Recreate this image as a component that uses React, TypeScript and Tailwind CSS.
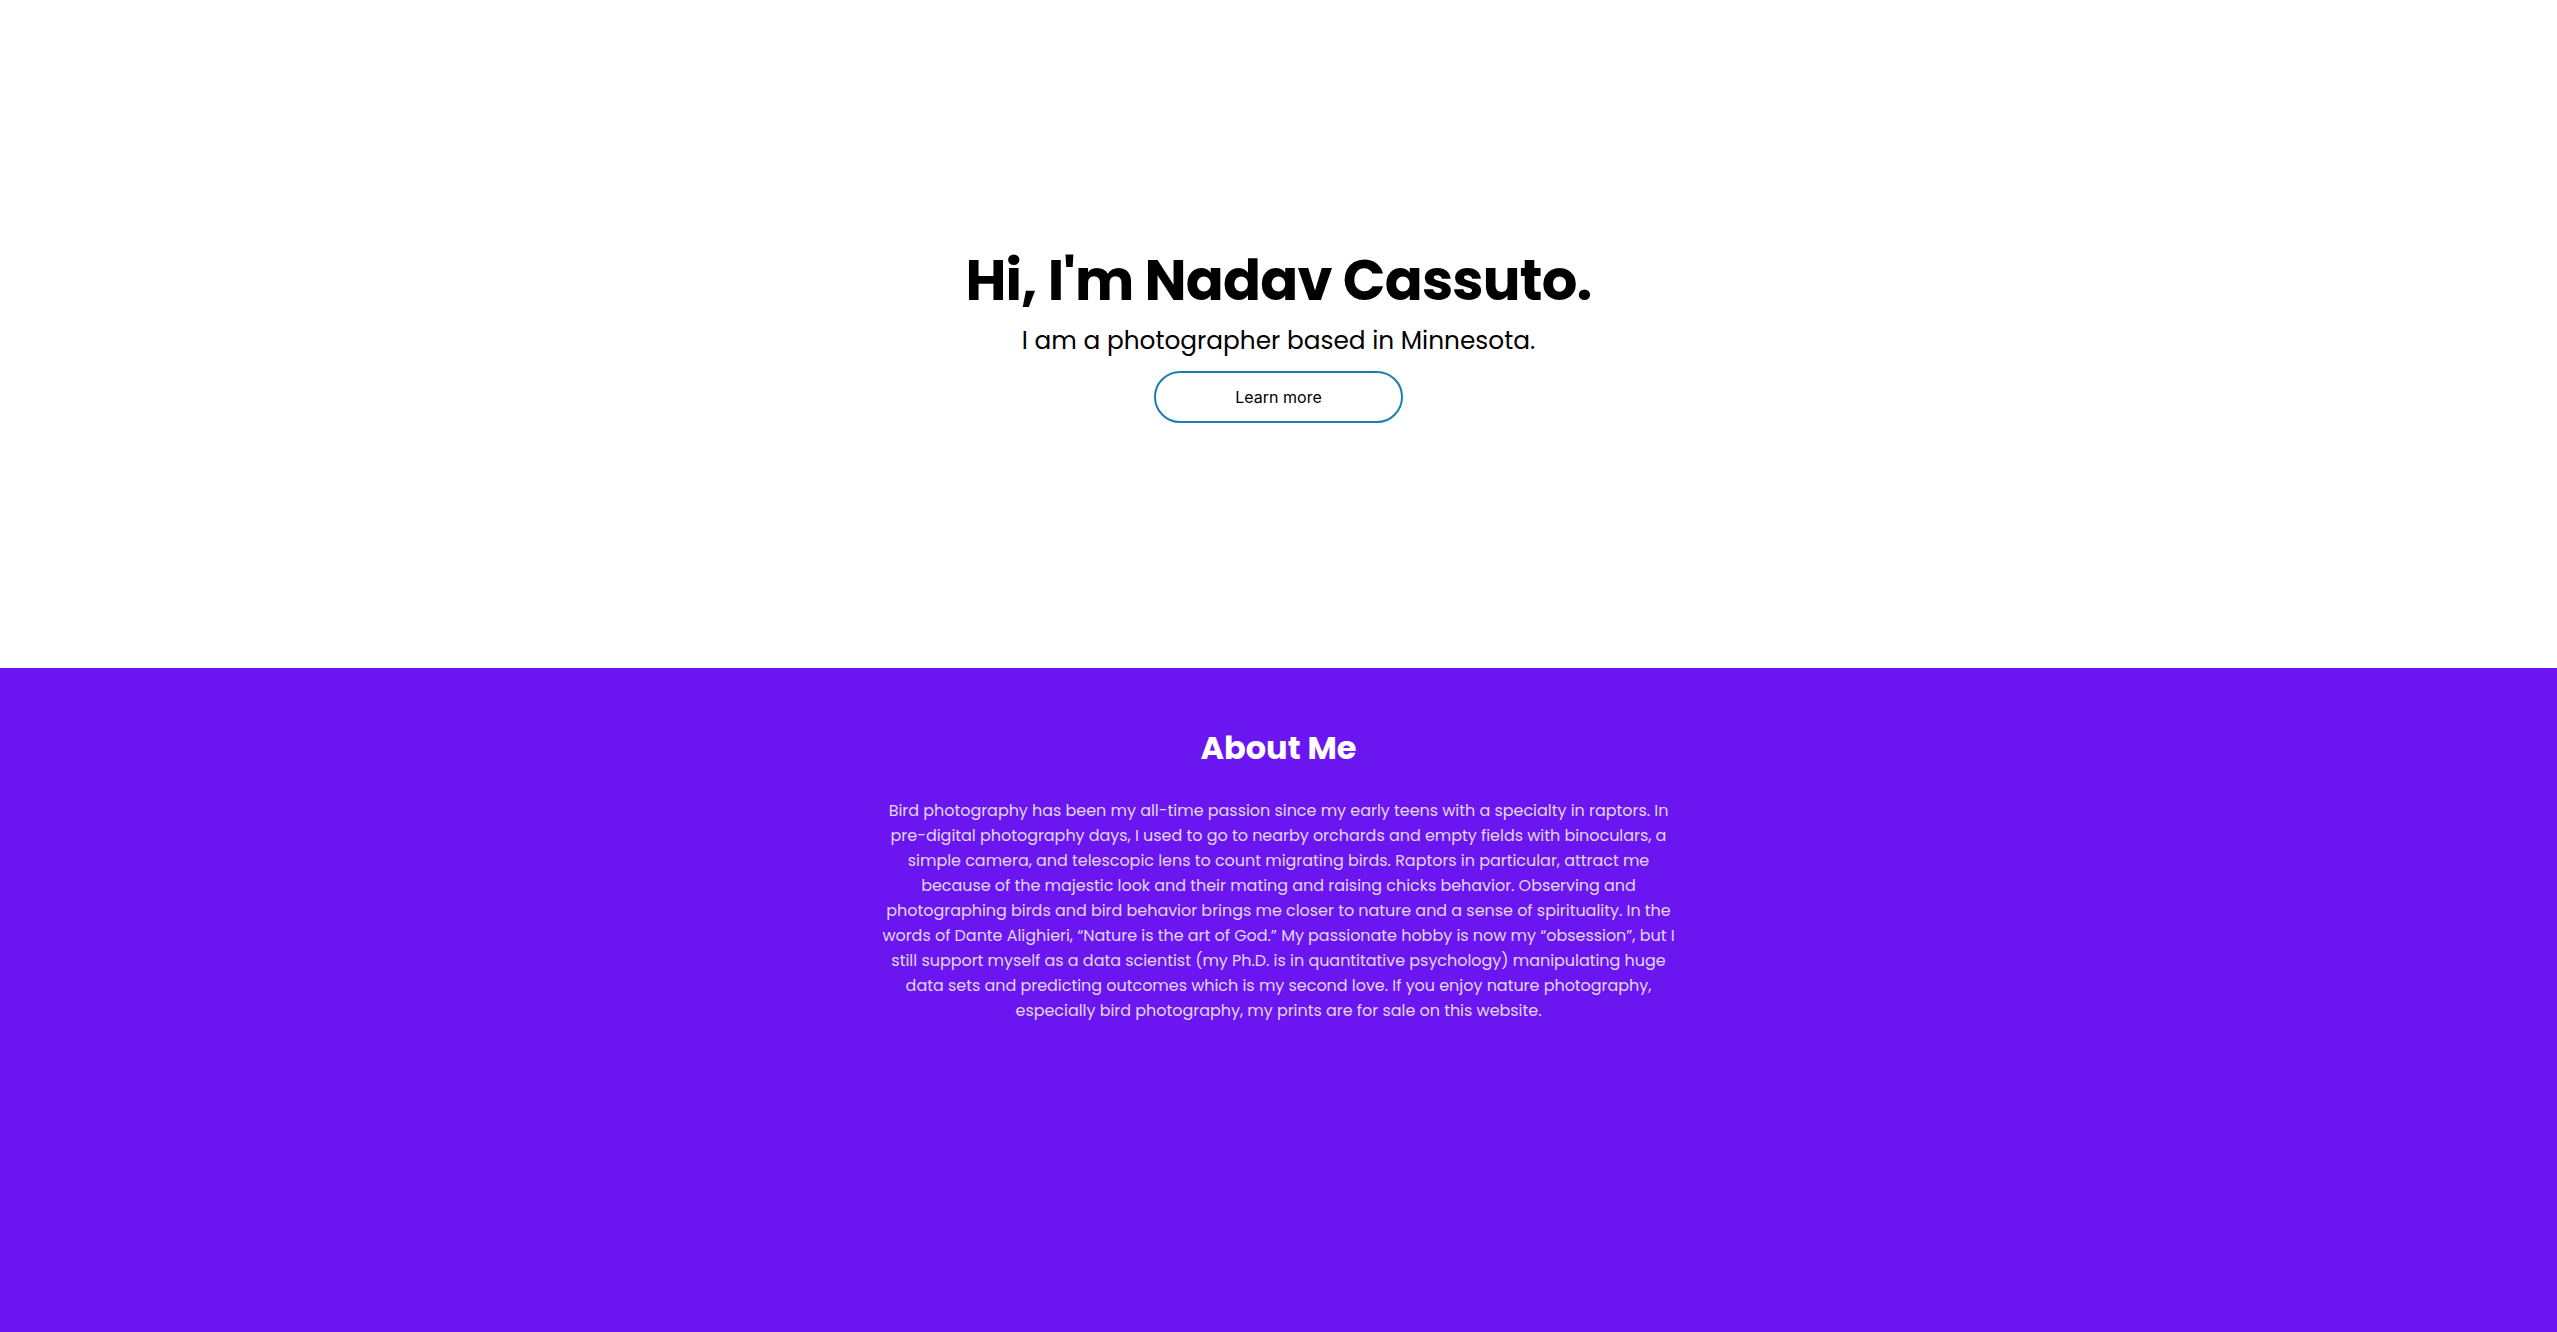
const aboutLines = [
  'Bird photography has been my all-time passion since my early teens with a specialty in raptors. In',
  'pre-digital photography days, I used to go to nearby orchards and empty fields with binoculars, a',
  'simple camera, and telescopic lens to count migrating birds. Raptors in particular, attract me',
  'because of the majestic look and their mating and raising chicks behavior. Observing and',
  'photographing birds and bird behavior brings me closer to nature and a sense of spirituality. In the',
  'words of Dante Alighieri, \u201cNature is the art of God.\u201d My passionate hobby is now my \u201cobsession\u201d, but I',
  'still support myself as a data scientist (my Ph.D. is in quantitative psychology) manipulating huge',
  'data sets and predicting outcomes which is my second love. If you enjoy nature photography,',
  'especially bird photography, my prints are for sale on this website.',
];

export default function App() {
  return (
    <div className="min-h-screen bg-white font-['Poppins','Inter',sans-serif]">
      {/* Hero */}
      <section className="flex h-[668px] flex-col items-center justify-center text-center">
        <h1 className="mt-[2px] text-[56px] font-bold leading-[1.2] tracking-[-0.8px] text-black">Hi, I'm Nadav Cassuto.</h1>
        <p className="mt-[8px] text-[24.8px] leading-[1.5] text-black">I am a photographer based in Minnesota.</p>
        <button className="mt-3 h-[52px] w-[249px] rounded-full border-2 border-[#1a7fb0] bg-white font-['Inter',sans-serif] text-[16px] text-black">
          Learn more
        </button>
      </section>

      {/* About */}
      <section className="flex h-[664px] flex-col items-center bg-[#6b16f1] pt-14 text-center">
        <h2 className="text-[32px] font-bold leading-[1.5] text-white">About Me</h2>
        <p className="mt-[26px] text-[16px] leading-[25px] tracking-[-0.04px] text-[#e0d6f7]">
          {aboutLines.map((line) => (
            <span key={line} className="block whitespace-nowrap">
              {line}
            </span>
          ))}
        </p>
      </section>
    </div>
  );
}
